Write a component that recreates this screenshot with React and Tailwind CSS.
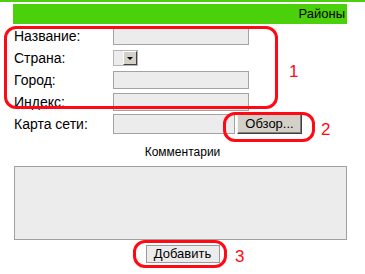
import React from "react";

const green = "bg-[#4bd10b]";

const Field = ({ label, children }) => (
  <div className="flex h-[22px] items-center">
    <div className="w-[113px] shrink-0 pl-[14px] text-[14px] leading-none text-black">{label}</div>
    {children}
  </div>
);

const TextInput = ({ w = "w-[136px]", h = "h-[18px]" }) => (
  <div className={`${w} ${h} border border-[#a3a3a3] bg-[#ececec]`} />
);

const Annot = ({ className }) => (
  <div className={`pointer-events-none absolute rounded-[12px] border-[3px] border-[#ff0a14] ${className}`} />
);

const Num = ({ children, className }) => (
  <div className={`absolute text-[17px] leading-none text-[#ff0a14] ${className}`}>{children}</div>
);

export default function App() {
  return (
    <div
      className="relative h-[274px] w-[365px] overflow-hidden bg-white"
      style={{ fontFamily: '"Liberation Sans", Arial, sans-serif' }}
    >
      <div className={`h-[2px] w-full ${green}`} />
      <div className={`mx-[13px] mt-[2px] flex h-[20px] w-[334px] items-center justify-end pr-[2px] text-[13px] text-black ${green}`}>
        Районы
      </div>

      <div className="mt-[1px] flex flex-col">
        <Field label="Название:">
          <TextInput />
        </Field>
        <Field label="Страна:">
          <div className="flex h-[16px] w-[25px] border border-[#b5b5b5] bg-[#ececec]">
            <div className="w-[9px]" />
            <div className="flex flex-1 items-center justify-center border border-t-white border-l-white border-r-[#404040] border-b-[#404040] bg-[#d4d0c8]">
              <div className="h-0 w-0 border-x-[3px] border-t-[3px] border-x-transparent border-t-black" />
            </div>
          </div>
        </Field>
        <Field label="Город:">
          <TextInput />
        </Field>
        <Field label="Индекс:">
          <TextInput />
        </Field>
        <Field label="Карта сети:">
          <TextInput w="w-[122px]" h="h-[20px]" />
          <button className="ml-[2px] flex h-[20px] w-[65px] items-center justify-center border border-t-[#f4f4f4] border-l-[#f4f4f4] border-r-[#404040] border-b-[#404040] bg-[#d4d0c8] text-[13px] text-black shadow-[inset_-1px_-1px_0_#808080]">
            Обзор...
          </button>
        </Field>
      </div>

      <div className="mt-[11px] text-center text-[12px] leading-none text-black">Комментарии</div>

      <div className="ml-[14px] mt-[8px] h-[74px] w-[333px] border border-[#a0a0a0] bg-[#ececec]" />

      <div className="mt-[5px] flex justify-center">
        <button className="flex h-[18px] w-[74px] items-center justify-center border border-[#9a9a9a] bg-[#ececec] text-[13px] text-black">
          Добавить
        </button>
      </div>

      <Annot className="left-[4px] top-[26px] h-[83px] w-[274px]" />
      <Annot className="left-[223px] top-[112px] h-[30px] w-[92px]" />
      <Annot className="left-[133px] top-[240px] h-[28px] w-[94px]" />
      <Num className="left-[289px] top-[63px]">1</Num>
      <Num className="left-[321px] top-[121px]">2</Num>
      <Num className="left-[235px] top-[248px]">3</Num>
    </div>
  );
}
